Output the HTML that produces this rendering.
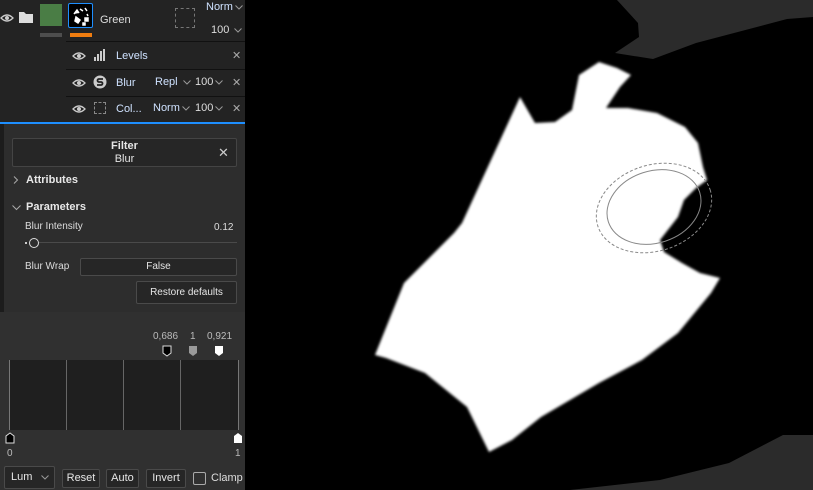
<!DOCTYPE html>
<html><head><style>
*{margin:0;padding:0;box-sizing:border-box}
body{width:813px;height:490px;overflow:hidden;background:#000;font-family:"Liberation Sans",sans-serif;font-size:11px;color:#ddd;position:relative}
.a{position:absolute}
.lp{left:0;top:0;width:245px;height:490px;background:#2d2d2d}
.row{position:absolute;left:66px;width:179px;border-top:1px solid #111;background:#232323}
.btn{position:absolute;border:1px solid #4a4a4a;border-radius:2px;background:#262626;text-align:center;color:#e6e6e6}
.x{position:absolute;color:#aaa;font-size:11px}
.cv{display:inline-block;width:8px;height:5px;margin-left:2px;vertical-align:middle}
</style></head><body>
<svg width="0" height="0" style="position:absolute"><defs><symbol id="cv" viewBox="0 0 8 5"><path d="M0.5 0.5L4 4 7.5 0.5" fill="none" stroke="#999" stroke-width="1"/></symbol></defs></svg>
<div class="a lp">
  <div class="a" style="left:0;top:0;width:245px;height:122px;background:#232323"></div>
  <svg class="a" style="left:0;top:12px" width="14" height="12" viewBox="0 0 14 12"><path d="M1 6 Q7 0 13 6 Q7 12 1 6Z" fill="none" stroke="#ccc" stroke-width="1.3"/><circle cx="7" cy="6" r="2" fill="#ccc"/></svg>
  <svg class="a" style="left:18px;top:10px" width="16" height="14"><path d="M1 2h5l2 2h7v9H1z" fill="#ddd"/></svg>
  <div class="a" style="left:40px;top:4px;width:22px;height:22px;background:#4a7d45"></div>
  <div class="a" style="left:40px;top:33px;width:22px;height:4px;background:#4d4d4d"></div>
  <div class="a" style="left:68px;top:3px;width:25px;height:25px;border:1px solid #1e8fff;border-radius:2px;background:#000"></div>
  <svg class="a" style="left:71px;top:6px" width="20" height="20"><path d="M3 8l3-4 2 3M9 3l3 2M14 2l2 3M5 11l4 3-2 3-3-2zM14 12h3v3h-3zM12 17h2v2h-2zM16 8l1 2" stroke="#fff" stroke-width="1.5" fill="#fff"/></svg>
  <div class="a" style="left:70px;top:33px;width:22px;height:4px;background:#f07d10"></div>
  <div class="a" style="left:100px;top:14px;font-size:11px;color:#ddd">Green</div>
  <div class="a" style="left:175px;top:8px;width:20px;height:20px;border:1px dashed #777"></div>
  <div class="a" style="left:206px;top:1px;color:#cfe2ff">Norm<svg class="cv"><use href="#cv"/></svg></div>
  <div class="a" style="left:211px;top:24px;color:#ddd">100 <svg class="cv"><use href="#cv"/></svg></div>
  <div class="row" style="top:41px;height:28px"></div>
  <div class="row" style="top:69px;height:27px"></div>
  <div class="row" style="top:96px;height:26px"></div>
  <svg class="a" style="left:72px;top:50px" width="14" height="12" viewBox="0 0 14 12"><path d="M1 6 Q7 0 13 6 Q7 12 1 6Z" fill="none" stroke="#ccc" stroke-width="1.3"/><circle cx="7" cy="6" r="2" fill="#ccc"/></svg>
  <svg class="a" style="left:72px;top:77px" width="14" height="12" viewBox="0 0 14 12"><path d="M1 6 Q7 0 13 6 Q7 12 1 6Z" fill="none" stroke="#ccc" stroke-width="1.3"/><circle cx="7" cy="6" r="2" fill="#ccc"/></svg>
  <svg class="a" style="left:72px;top:103px" width="14" height="12" viewBox="0 0 14 12"><path d="M1 6 Q7 0 13 6 Q7 12 1 6Z" fill="none" stroke="#ccc" stroke-width="1.3"/><circle cx="7" cy="6" r="2" fill="#ccc"/></svg>
  <svg class="a" style="left:94px;top:48px" width="12" height="14"><path d="M1 9v4M4 6v7M7 3v10M10 1v12" stroke="#ccc" stroke-width="2"/></svg>
  <svg class="a" style="left:93px;top:75px" width="14" height="14"><circle cx="7" cy="7" r="6.5" fill="#ccc"/><path d="M10 4H6a1.5 1.5 0 0 0 0 3h2a1.5 1.5 0 0 1 0 3H4" stroke="#232323" stroke-width="1.8" fill="none"/></svg>
  <div class="a" style="left:94px;top:102px;width:12px;height:12px;border:1px dashed #888"></div>
  <div class="a" style="left:116px;top:50px;color:#cfe2ff">Levels</div>
  <div class="a" style="left:116px;top:77px;color:#cfe2ff">Blur</div>
  <div class="a" style="left:116px;top:103px;color:#cfe2ff">Col...</div>
  <div class="a" style="left:155px;top:76px;color:#cfe2ff">Repl <svg class="cv"><use href="#cv"/></svg></div>
  <div class="a" style="left:195px;top:76px;color:#ddd">100<svg class="cv"><use href="#cv"/></svg></div>
  <div class="a" style="left:153px;top:102px;color:#cfe2ff">Norm<svg class="cv"><use href="#cv"/></svg></div>
  <div class="a" style="left:195px;top:102px;color:#ddd">100<svg class="cv"><use href="#cv"/></svg></div>
  <div class="x" style="left:232px;top:49px">✕</div>
  <div class="x" style="left:232px;top:76px">✕</div>
  <div class="x" style="left:232px;top:102px">✕</div>
  <div class="a" style="left:0;top:122px;width:245px;height:2px;background:#1e8fff"></div>
  <div class="a" style="left:0;top:124px;width:4px;height:188px;background:#1c1c1c"></div>
  <div class="btn" style="left:12px;top:138px;width:225px;height:29px;border-color:#444;line-height:13px;padding-top:1px"><b>Filter</b><br>Blur</div>
  <div class="a" style="left:218px;top:145px;color:#ccc;font-size:13px">✕</div>
  <svg class="a" style="left:13px;top:176px" width="6" height="8"><path d="M1 0.5L4.5 4 1 7.5" fill="none" stroke="#aaa"/></svg>
  <div class="a" style="left:26px;top:174px;font-weight:bold;color:#e8e8e8">Attributes</div>
  <svg class="a" style="left:12px;top:205px" width="9" height="6"><path d="M0.5 0.5L4.5 4.5 8.5 0.5" fill="none" stroke="#aaa"/></svg>
  <div class="a" style="left:26px;top:201px;font-weight:bold;color:#e8e8e8">Parameters</div>
  <div class="a" style="left:25px;top:221px;font-size:10px">Blur Intensity</div>
  <div class="a" style="left:214px;top:222px;font-size:10px">0.12</div>
  <div class="a" style="left:36px;top:242px;width:201px;height:1px;background:#4a4a4a"></div>
  <div class="a" style="left:25px;top:242px;width:2px;height:2px;background:#ccc"></div>
  <div class="a" style="left:29px;top:238px;width:10px;height:10px;border:1.5px solid #ddd;border-radius:50%;background:#2d2d2d"></div>
  <div class="a" style="left:25px;top:261px;font-size:10px">Blur Wrap</div>
  <div class="btn" style="left:80px;top:258px;width:157px;height:18px;line-height:16px;font-size:10px">False</div>
  <div class="btn" style="left:136px;top:281px;width:101px;height:23px;line-height:21px;font-size:10px">Restore defaults</div>
  <div class="a" style="left:0;top:312px;width:245px;height:178px;background:#303030"></div>
  <div class="a" style="left:153px;top:331px;color:#bbb;font-size:10px">0,686</div>
  <div class="a" style="left:190px;top:331px;color:#bbb;font-size:10px">1</div>
  <div class="a" style="left:207px;top:331px;color:#bbb;font-size:10px">0,921</div>
  <svg class="a" style="left:161px;top:345px" width="70" height="12"><path d="M2 1h8v7l-4 3-4-3z" fill="#000" stroke="#ddd"/><path d="M28 1h8v7l-4 3-4-3z" fill="#999"/><path d="M54 1h8v7l-4 3-4-3z" fill="#fff"/></svg>
  <div class="a" style="left:9px;top:360px;width:230px;height:70px;background:#1f1f1f;border-left:1px solid #777;border-right:1px solid #777"></div>
  <div class="a" style="left:66px;top:360px;width:1px;height:70px;background:#666"></div>
  <div class="a" style="left:123px;top:360px;width:1px;height:70px;background:#666"></div>
  <div class="a" style="left:180px;top:360px;width:1px;height:70px;background:#666"></div>
  <svg class="a" style="left:4px;top:432px" width="240" height="12"><path d="M2 11V4l4-3 4 3v7z" fill="#000" stroke="#ddd"/><path d="M230 11V4l4-3 4 3v7z" fill="#fff"/></svg>
  <div class="a" style="left:7px;top:448px;color:#bbb;font-size:10px">0</div>
  <div class="a" style="left:235px;top:448px;color:#bbb;font-size:10px">1</div>
  <div class="btn" style="left:4px;top:466px;width:51px;height:23px;line-height:21px;text-align:left;padding-left:6px">Lum <svg class="cv" style="margin-left:6px"><use href="#cv"/></svg></div>
  <div class="btn" style="left:62px;top:469px;width:38px;height:19px;line-height:17px">Reset</div>
  <div class="btn" style="left:106px;top:469px;width:33px;height:19px;line-height:17px">Auto</div>
  <div class="btn" style="left:146px;top:469px;width:40px;height:19px;line-height:17px">Invert</div>
  <div class="a" style="left:193px;top:472px;width:13px;height:13px;border:1.5px solid #aaa;border-radius:2px"></div>
  <div class="a" style="left:211px;top:472px;color:#ddd">Clamp</div>
</div>
<svg class="a" style="left:0;top:0" width="813" height="490">
<defs><filter id="b" x="-5%" y="-5%" width="110%" height="110%"><feGaussianBlur stdDeviation="1.2"/></filter></defs>
<polygon points="617,0 813,0 813,17 787,19 696,43 653,59 615,53 639,37 638,23" fill="#2b2b2b"/>
<polygon points="813,435 783,435 729,463 660,480 570,490 813,490" fill="#2b2b2b"/>
<polygon filter="url(#b)" fill="#fff" points="520,97 535,123 555,122 572,110 579,75 599,62 617,68 631,75 620,87 606,108 628,108 657,113 685,127 698,143 703,167 707,180 696,188 684,200 678,217 660,240 664,252 682,263 700,273 720,278 711,293 678,333 642,360 599,383 541,417 512,440 489,452 467,407 425,373 386,358 375,355 404,283 454,233 462,223"/>
<ellipse cx="654" cy="208" rx="59" ry="43" transform="rotate(-18 654 208)" fill="none" stroke="#888" stroke-width="1" stroke-dasharray="3 2"/>
<ellipse cx="654" cy="207" rx="48" ry="36" transform="rotate(-18 654 207)" fill="none" stroke="#888" stroke-width="1"/>
</svg>
</body></html>
